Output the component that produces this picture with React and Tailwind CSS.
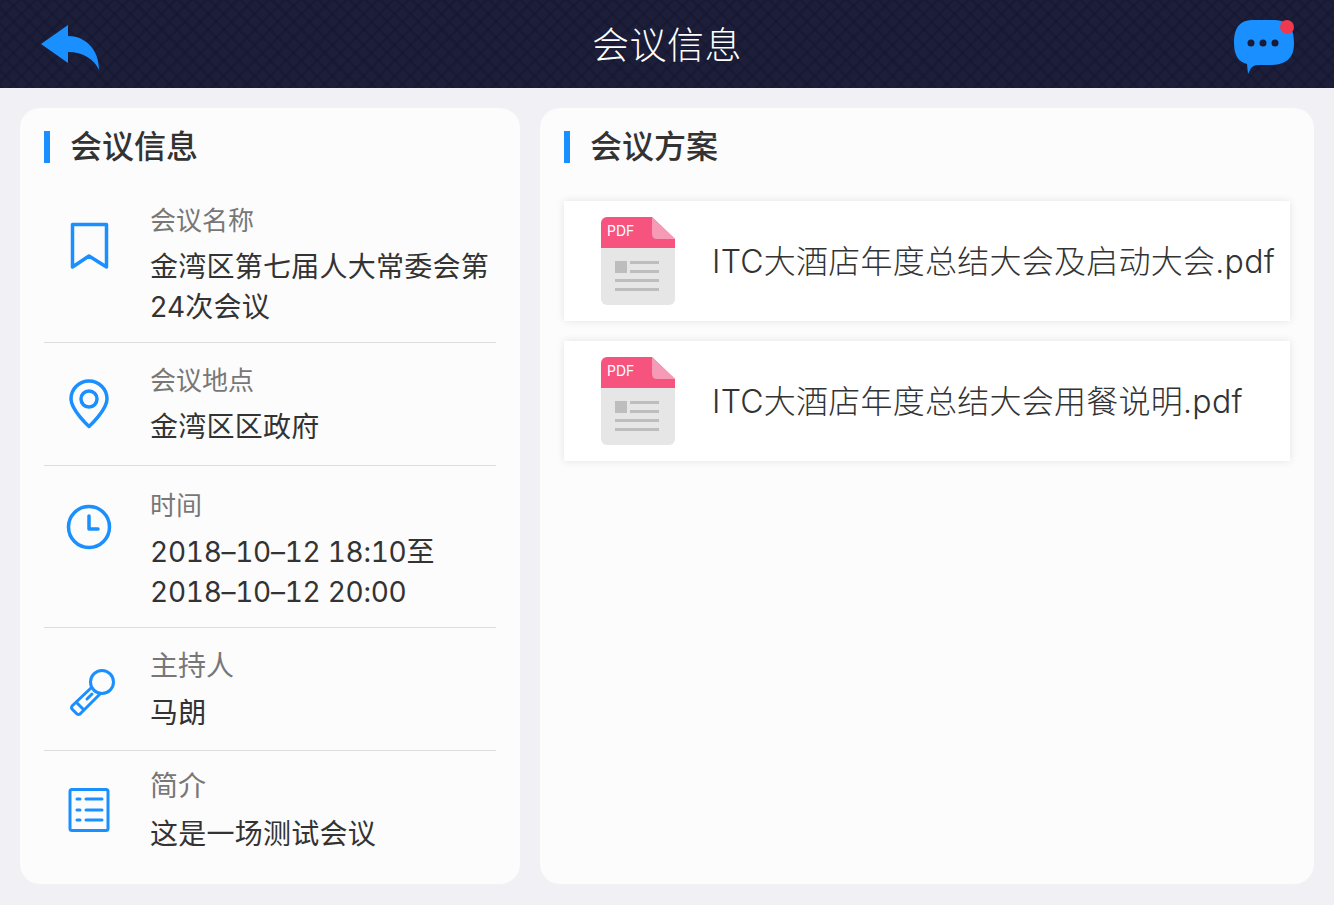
import React from 'react';

const BackIcon = () => (
  <svg width="60" height="46" viewBox="0 0 60 46">
    <path d="M0 19 L27 0 V11 C44 11 58 24 58 45 C53 34 42 27 27 27 V38 Z" fill="#1a8fff" />
  </svg>
);

const ChatIcon = () => (
  <svg width="62" height="56" viewBox="0 0 62 56">
    <path d="M20 0 H38 C54 0 60 7 60 23 C60 38 53 44 38 45 H24 C21 45 19 46 17 48 L14 54 L13 44 C5 42 0 36 0 23 C0 7 6 0 20 0 Z" fill="#1a8fff" />
    <circle cx="17" cy="23" r="3.5" fill="#1a1c37" />
    <circle cx="29" cy="23" r="3.5" fill="#1a1c37" />
    <circle cx="41" cy="23" r="3.5" fill="#1a1c37" />
    <circle cx="53" cy="7" r="7" fill="#f0394f" />
  </svg>
);

const BookmarkIcon = () => (
  <svg width="60" height="60" viewBox="0 0 60 60" fill="none" stroke="#1a8fff" strokeWidth="3.5" strokeLinejoin="round">
    <path d="M13.5 8.5 H47.5 V51 L30 40 L13.5 51 Z" />
  </svg>
);

const PinIcon = () => (
  <svg width="60" height="60" viewBox="0 0 60 60" fill="none" stroke="#1a8fff" strokeWidth="3.5" strokeLinejoin="round">
    <path d="M30 53.5 C30 53.5 12 37 12 26 A18 18 0 0 1 48 26 C48 37 30 53.5 30 53.5 Z" />
    <circle cx="30" cy="26" r="8" />
  </svg>
);

const ClockIcon = () => (
  <svg width="60" height="60" viewBox="0 0 60 60" fill="none" stroke="#1a8fff" strokeWidth="3.5" strokeLinecap="round" strokeLinejoin="round">
    <circle cx="30" cy="30" r="20.5" />
    <path d="M30 19 V32 H39" />
  </svg>
);

const MicIcon = () => (
  <svg width="60" height="60" viewBox="0 0 60 60" fill="none" stroke="#1a8fff" strokeWidth="3" strokeLinecap="round" strokeLinejoin="round">
    <circle cx="43" cy="21" r="11.5" />
    <path d="M32 27 L13 45 Q12 46.5 13 48 L18 53 Q19.5 54 21 53 L41 33" />
    <path d="M18 42 L24 48" />
    <path d="M28 38 L33 33" />
  </svg>
);

const ListIcon = () => (
  <svg width="60" height="60" viewBox="0 0 60 60" fill="none" stroke="#1a8fff" strokeWidth="3" strokeLinecap="round" strokeLinejoin="round">
    <rect x="11" y="9.5" width="38" height="41" rx="2" />
    <path d="M18 19 H21 M27 19 H43 M18 30 H21 M27 30 H43 M18 40 H21 M27 40 H43" />
  </svg>
);

const PdfIcon = () => (
  <svg width="74" height="88" viewBox="0 0 74 88" className="shrink-0">
    <path d="M0 30 H74 V82 A6 6 0 0 1 68 88 H6 A6 6 0 0 1 0 82 Z" fill="#e6e6e6" />
    <path d="M6 0 H51 L74 22 V31 H0 V6 A6 6 0 0 1 6 0 Z" fill="#f6547f" />
    <path d="M51 0 L74 22 H56 Q51 22 51 17 Z" fill="#f79ab5" />
    <rect x="14" y="44" width="12" height="12" fill="#bdbdbd" />
    <rect x="29" y="44" width="29" height="3" fill="#bdbdbd" />
    <rect x="29" y="53" width="29" height="3" fill="#bdbdbd" />
    <rect x="14" y="62" width="44" height="3" fill="#bdbdbd" />
    <rect x="14" y="71" width="44" height="3" fill="#bdbdbd" />
    <text x="6" y="19" fontSize="14" fill="#ffffff">PDF</text>
  </svg>
);

const SectionTitle = ({ children }) => (
  <div className="flex items-center h-8">
    <div className="w-1.5 h-8 bg-[#1a8fff]"></div>
    <h2 className="ml-5 text-[32px] leading-8 font-medium text-[#333333]">{children}</h2>
  </div>
);

const InfoRow = ({ icon, label, lines, rowClass, iconClass, labelClass = 'text-[26px]', valueClass = 'mt-1.5 tracking-[0.25px]', border = true }) => (
  <div className={`flex ${rowClass} ${border ? 'border-b border-[#dddddd]' : ''}`}>
    <div className={`ml-[15px] mr-[31px] w-[60px] h-[60px] shrink-0 ${iconClass}`}>{icon}</div>
    <div className="flex-1">
      <div className={`leading-10 text-[#777777] ${labelClass}`}>{label}</div>
      <div className={`text-[28px] leading-10 text-[#333333] ${valueClass}`}>
        {lines.map(line => (
          <div key={line}>{line}</div>
        ))}
      </div>
    </div>
  </div>
);

const FileCard = ({ name }) => (
  <div className="flex items-center h-[120px] pl-[37px] bg-white shadow-[0_0_8px_rgba(0,0,0,0.1)]">
    <PdfIcon />
    <span className="ml-[37px] mt-px text-[32px] tracking-[0.25px] whitespace-nowrap text-[#333333] font-light">{name}</span>
  </div>
);

export default function App() {
  return (
    <div className="h-[905px] flex flex-col bg-[#f0f0f5] font-['Inter','Noto_Sans_CJK_SC',sans-serif]">
      <header className="relative h-[88px] shrink-0 flex items-center justify-between pl-[41px] pr-[38px] bg-[#1c1e3a] bg-[repeating-linear-gradient(45deg,rgba(16,18,40,0.25)_0_3px,transparent_3px_11px),repeating-linear-gradient(-45deg,rgba(16,18,40,0.25)_0_3px,transparent_3px_11px)]">
        <div className="mt-2"><BackIcon /></div>
        <h1 className="absolute left-0 right-0 mt-1 text-center text-[37px] text-white font-light tracking-[0.5px]">会议信息</h1>
        <div className="mt-2"><ChatIcon /></div>
      </header>

      <main className="flex-1 flex gap-5 pt-5 px-5 pb-[21px]">
        <section className="w-[500px] shrink-0 px-6 pt-[23px] bg-[#fcfcfc] rounded-[20px]">
          <SectionTitle>会议信息</SectionTitle>
          <div className="mt-[19px]">
            <InfoRow
              icon={<BookmarkIcon />}
              label="会议名称"
              lines={['金湾区第七届人大常委会第', '24次会议']}
              rowClass="h-[161px] pt-[19px]"
              iconClass="mt-[15px]"
            />
            <InfoRow
              icon={<PinIcon />}
              label="会议地点"
              lines={['金湾区区政府']}
              rowClass="h-[123px] pt-[18px]"
              iconClass="mt-[12px]"
            />
            <InfoRow
              icon={<ClockIcon />}
              label="时间"
              valueClass="mt-1.5 tracking-[-0.28px]"
              lines={['2018–10–12 18:10至', '2018–10–12 20:00']}
              rowClass="h-[162px] pt-[20px] tabular-nums"
              iconClass="mt-[11px]"
            />
            <InfoRow
              icon={<MicIcon />}
              label="主持人"
              labelClass="text-[28px]"
              valueClass="mt-[7px] tracking-[0.25px]"
              lines={['马朗']}
              rowClass="h-[123px] pt-[18px]"
              iconClass="mt-[15px]"
            />
            <InfoRow
              icon={<ListIcon />}
              label="简介"
              labelClass="text-[28px]"
              valueClass="mt-2 tracking-[0.25px]"
              lines={['这是一场测试会议']}
              rowClass="pt-[15px]"
              iconClass="mt-[14px]"
              border={false}
            />
          </div>
        </section>

        <section className="flex-1 px-6 pt-[23px] bg-[#fcfcfc] rounded-[20px]">
          <SectionTitle>会议方案</SectionTitle>
          <div className="mt-[38px] flex flex-col gap-5">
            <FileCard name="ITC大酒店年度总结大会及启动大会.pdf" />
            <FileCard name="ITC大酒店年度总结大会用餐说明.pdf" />
          </div>
        </section>
      </main>
    </div>
  );
}
